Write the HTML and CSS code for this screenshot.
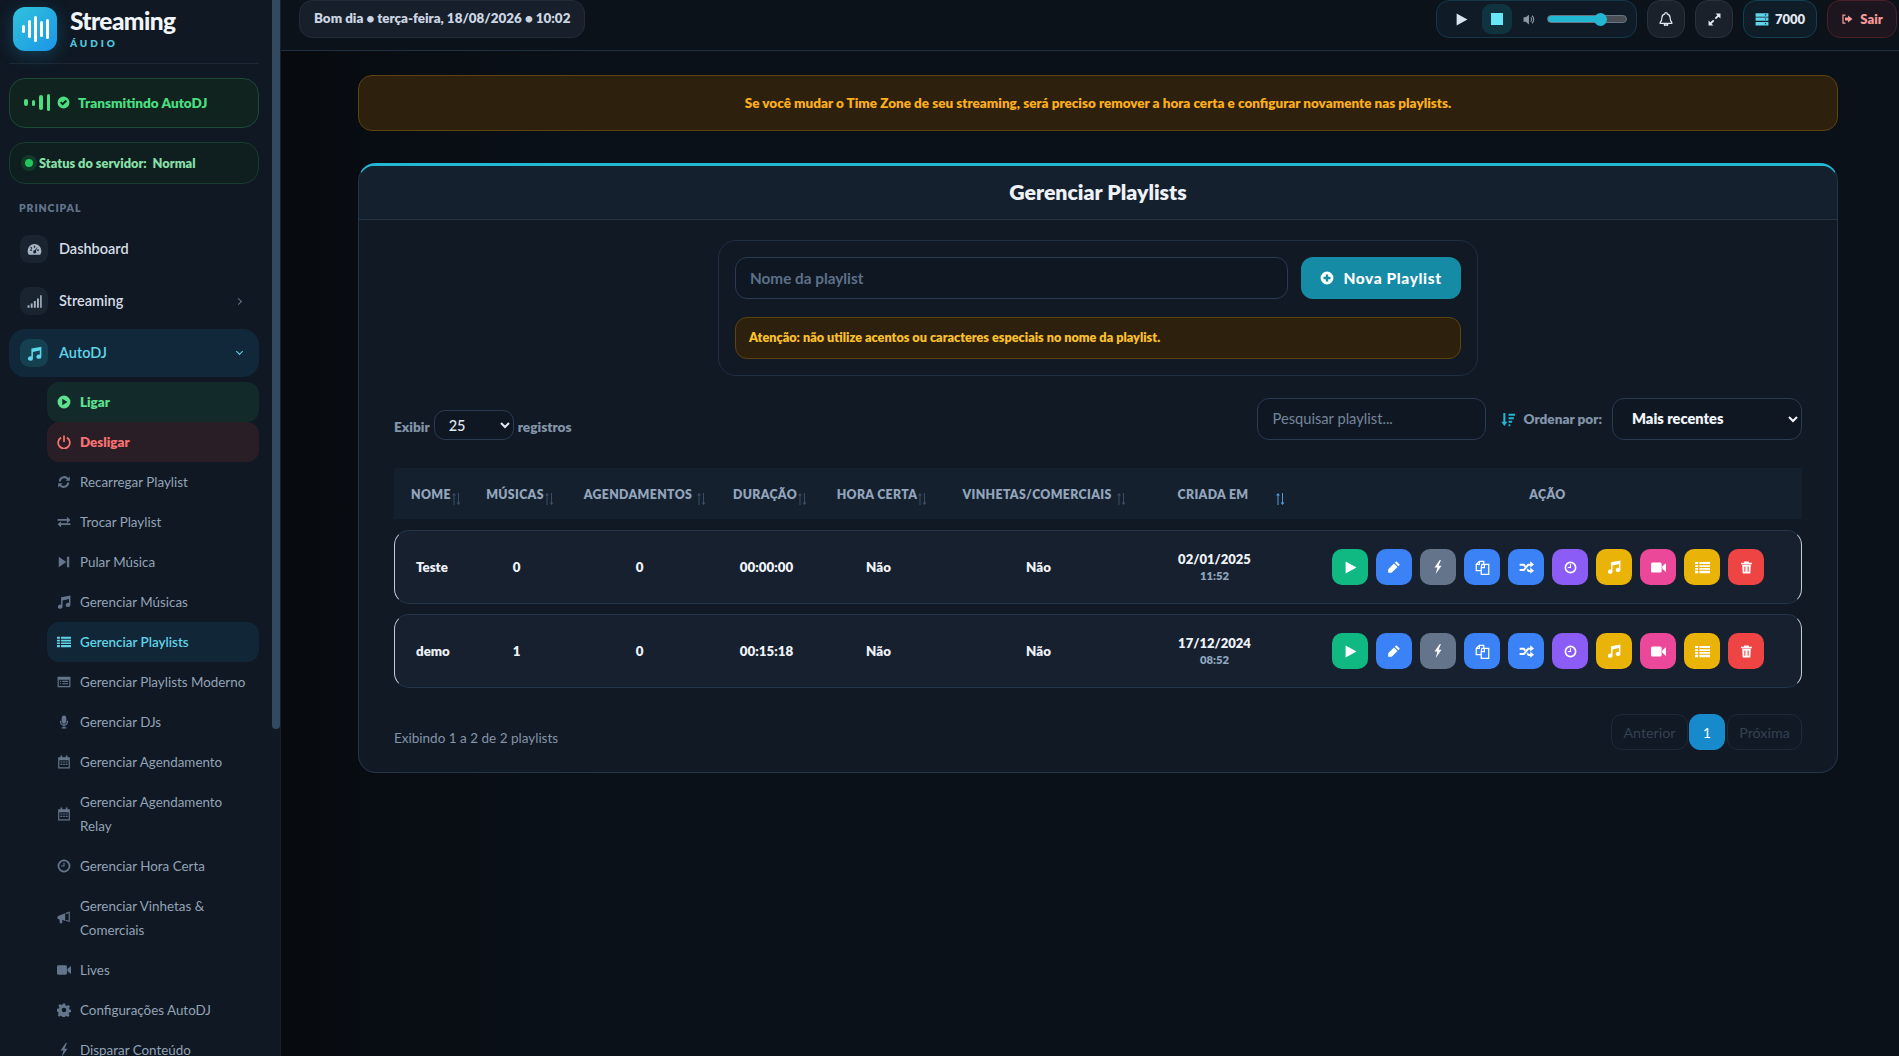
FILE: index.html
```html
<!DOCTYPE html>
<html lang="pt-BR">
<head>
<meta charset="utf-8">
<title>Gerenciar Playlists</title>
<link rel="stylesheet" href="styles.css">
</head>
<body>
<svg class="defs" aria-hidden="true">
  <symbol id="i-play" viewBox="0 0 24 24"><path d="M3 1l20 11L3 23z"/></symbol>
  <symbol id="i-pencil" viewBox="0 0 24 24"><path d="M16 2l6 6-2.500 2.500-6-6zM12 6l6 6L8 22H2v-6z"/></symbol>
  <symbol id="i-bolt" viewBox="0 0 24 24"><path d="M15 0L6 13h5L8 24l10-14h-5l4-10z"/></symbol>
  <symbol id="i-copy" viewBox="0 0 24 24"><path fill="none" stroke="currentColor" stroke-width="2" d="M9 17H2V7l5-5h7v5M11 7h11v16H10V12zM10 12h5V7M7 2v5H2"/></symbol>
  <symbol id="i-random" viewBox="0 0 24 24"><path d="M18 2l6 5-6 5V9h-2.500l-7 8.500H1v-3h6l7-8.500h4zM18 12l6 5-6 5v-3h-3.500l-2.500-3 2-2.400 1.800 2.400H18zM1 6h7.500l2.500 3-2 2.400L7 9H1z"/></symbol>
  <symbol id="i-clock" viewBox="0 0 24 24"><circle cx="12" cy="12" r="9.500" fill="none" stroke="currentColor" stroke-width="3"/><path d="M11 6h2v7H7v-2h4z"/></symbol>
  <symbol id="i-music" viewBox="0 0 24 24"><path d="M23 1v16a4 3.400 0 1 1-2.500-3.100V7l-11 2.500V20a4 3.400 0 1 1-2.500-3.100V4z"/></symbol>
  <symbol id="i-video" viewBox="0 0 24 24"><rect x="0" y="4" width="17" height="16" rx="2.500"/><path d="M18 10l6-5v14l-6-5z"/></symbol>
  <symbol id="i-list" viewBox="0 0 24 24"><path d="M0 3h5v3.500H0zM7 3h17v3.500H7zM0 8.200h5V11H0zM7 8.200h17V11H7zM0 12.700h5v2.800H0zM7 12.700h17v2.800H7zM0 17.200h5V21H0zM7 17.200h17V21H7z"/></symbol>
  <symbol id="i-moderno" viewBox="0 0 24 24"><path fill-rule="evenodd" d="M1 3h22v18H1zM3 8v11h18V8zM5 10h2v2H5zM9 10h10v2H9zM5 14h2v2H5zM9 14h10v2H9z"/></symbol>
  <symbol id="i-trash" viewBox="0 0 24 24"><path d="M8 1h8l1 2h5v3H2V3h5zM4 7h16l-1 16H5zM8 10v10h2V10zM14 10v10h2V10z" fill-rule="evenodd"/></symbol>
  <symbol id="i-gauge" viewBox="0 0 24 24"><path fill-rule="evenodd" d="M12 3a11 11 0 0 1 11 11c0 2.500-.8 4.800-2 6.500H3C1.800 18.800 1 16.500 1 14A11 11 0 0 1 12 3zM11 6v3h2V6zM5 12v2h3v-2zM16 12v2h3v-2zM6.500 7.500L5.200 9l2 2 1.400-1.400zM17 7l-4.500 6.200a2.500 2.500 0 1 0 1.800 1z"/></symbol>
  <symbol id="i-signal" viewBox="0 0 24 24"><path d="M1 18h3v4H1zM6 15h3v7H6zM11 11h3v11h-3zM16 7h3v15h-3zM21 2h2.500v20H21z"/></symbol>
  <symbol id="i-check" viewBox="0 0 24 24"><path fill-rule="evenodd" d="M12 1a11 11 0 1 0 0 22 11 11 0 0 0 0-22zM18.500 9.500l-8 8-5-5L8 10l2.500 2.500L16 7z"/></symbol>
  <symbol id="i-circleplay" viewBox="0 0 24 24"><path fill-rule="evenodd" d="M12 1a11 11 0 1 0 0 22 11 11 0 0 0 0-22zM9 6.500l9 5.500-9 5.500z"/></symbol>
  <symbol id="i-power" viewBox="0 0 24 24"><path d="M10.500 1h3v11h-3z"/><path d="M7 4.500a10 10 0 1 0 10 0" fill="none" stroke="currentColor" stroke-width="3"/></symbol>
  <symbol id="i-refresh" viewBox="0 0 24 24"><path d="M3 11A9.500 9.500 0 0 1 19.500 5L22 2.500V10h-7.500l2.500-2.500A6 6 0 0 0 6.500 11zM21 13A9.500 9.500 0 0 1 4.500 19L2 21.500V14h7.500L7 16.500A6 6 0 0 0 17.500 13z"/></symbol>
  <symbol id="i-exchange" viewBox="0 0 24 24"><path d="M1 7h16V3l6 5.500-6 5.500v-4H1zM23 14H7v-3.500L1 16l6 5.500V17h16z" /></symbol>
  <symbol id="i-skip" viewBox="0 0 24 24"><path d="M3 3l13 9-13 9zM17 3h4v18h-4z"/></symbol>
  <symbol id="i-mic" viewBox="0 0 24 24"><rect x="8" y="1" width="8" height="14" rx="4"/><path d="M5 10h2v1a5 5 0 0 0 10 0v-1h2v1a7 7 0 0 1-6 7v3h3v2H8v-2h3v-3a7 7 0 0 1-6-7z"/></symbol>
  <symbol id="i-calendar" viewBox="0 0 24 24"><path fill-rule="evenodd" d="M6 1h3v3h6V1h3v3h4v19H2V4h4zM4 9v12h16V9zM6 11h3v2H6zM10.500 11h3v2h-3zM15 11h3v2h-3zM6 15h3v2H6zM10.500 15h3v2h-3zM15 15h3v2h-3z"/></symbol>
  <symbol id="i-bullhorn" viewBox="0 0 24 24"><path d="M1 9l13-5v13L9 15v6H5l-1-7-3-.5z"/><path d="M15 3l7-2v18l-7-2v-2l5 1.500V4l-5 1.500z"/></symbol>
  <symbol id="i-gear" viewBox="0 0 24 24"><path fill-rule="evenodd" d="M10 1h4l.6 3 2.300 1 2.600-1.700 2.800 2.800L20.600 8.700l1 2.300 2.400.6v4l-3 .6-1 2.300 1.700 2.600-2.800 2.800-2.600-1.700-2.300 1-.6 2.800h-4l-.6-3-2.300-1-2.600 1.700-2.800-2.800 1.700-2.600-1-2.300L0 14v-4l3-.6 1-2.300L2.300 4.500l2.800-2.800 2.600 1.700 2-1zM12 8a4 4 0 1 0 0 8 4 4 0 0 0 0-8z"/></symbol>
  <symbol id="i-volume" viewBox="0 0 24 24"><path d="M1 8h4l6-5v18l-6-5H1z"/><path d="M14 8a5 5 0 0 1 0 8M16.500 5a9 9 0 0 1 0 14" fill="none" stroke="currentColor" stroke-width="2"/></symbol>
  <symbol id="i-bell" viewBox="0 0 24 24"><path d="M12 1a2 2 0 0 1 2 2.200A7 7 0 0 1 19 10c0 5 1 6 3 8v1.500H2V18c2-2 3-3 3-8a7 7 0 0 1 5-6.800A2 2 0 0 1 12 1zM9 21h6a3 3 0 0 1-6 0z" fill="none" stroke="currentColor" stroke-width="2"/></symbol>
  <symbol id="i-expand" viewBox="0 0 24 24"><path d="M14 1h9v9l-3.300-3.300-5 5-2.400-2.400 5-5zM10 23H1v-9l3.300 3.300 5-5 2.400 2.400-5 5z"/></symbol>
  <symbol id="i-server" viewBox="0 0 24 24"><path fill-rule="evenodd" d="M1 2h22v6H1zM1 9.500h22v5.500H1zM1 17h22v6H1zM17 4v2h2V4zM17 11v2h2v-2zM17 19v2h2v-2z"/></symbol>
  <symbol id="i-signout" viewBox="0 0 24 24"><path d="M9 4H4v16h5" fill="none" stroke="currentColor" stroke-width="2.500"/><path d="M14 5l9 7-9 7v-4H8V9h6z"/></symbol>
  <symbol id="i-plus" viewBox="0 0 24 24"><path fill-rule="evenodd" d="M12 1a11 11 0 1 0 0 22 11 11 0 0 0 0-22zM10 6h4v4h4v4h-4v4h-4v-4H6v-4h4z"/></symbol>
  <symbol id="i-sortdown" viewBox="0 0 24 24"><path d="M4 1h3.500v15H11l-5.200 7L.5 16H4zM13 2h11v3.500H13zM13 8h9v3.500h-9zM13 14h6v3.500h-6zM13 20h3v3.500h-3z"/></symbol>
  <symbol id="i-sort" viewBox="0 0 9 12"><path d="M1.500 12V2.500H0L2 0l2 2.500H2.500V12z"/><path d="M6 0v9.500H4.500L6.500 12l2-2.500H7V0z"/></symbol>
</svg>

<div class="shell">
  <aside class="sidebar">
    <div class="brand">
      <div class="logo">
        <span class="lb b1"></span><span class="lb b2"></span><span class="lb b3"></span><span class="lb b4"></span><span class="lb b5"></span>
      </div>
      <div class="brand-text">
        <div class="brand-name">Streaming</div>
        <div class="brand-sub">ÁUDIO</div>
      </div>
    </div>

    <div class="live-card">
      <span class="eq"><i class="e1"></i><i class="e2"></i><i class="e3"></i><i class="e4"></i></span>
      <svg class="ic13"><use href="#i-check"/></svg>
      <span>Transmitindo AutoDJ</span>
    </div>
    <div class="server-card">
      <span class="dot"></span>
      <span>Status do servidor:&nbsp; Normal</span>
    </div>

    <div class="section-label">PRINCIPAL</div>

    <nav class="nav">
      <a class="nav-item"><span class="nav-ic"><svg><use href="#i-gauge"/></svg></span><span class="nav-tx">Dashboard</span></a>
      <a class="nav-item"><span class="nav-ic"><svg><use href="#i-signal"/></svg></span><span class="nav-tx">Streaming</span><span class="chev right"></span></a>
      <a class="nav-item open"><span class="nav-ic"><svg><use href="#i-music"/></svg></span><span class="nav-tx">AutoDJ</span><span class="chev down"></span></a>
      <div class="sub">
        <a class="sub-item on"><svg><use href="#i-circleplay"/></svg><span>Ligar</span></a>
        <a class="sub-item off"><svg><use href="#i-power"/></svg><span>Desligar</span></a>
        <a class="sub-item"><svg><use href="#i-refresh"/></svg><span>Recarregar Playlist</span></a>
        <a class="sub-item"><svg><use href="#i-exchange"/></svg><span>Trocar Playlist</span></a>
        <a class="sub-item"><svg><use href="#i-skip"/></svg><span>Pular Música</span></a>
        <a class="sub-item"><svg><use href="#i-music"/></svg><span>Gerenciar Músicas</span></a>
        <a class="sub-item active"><svg><use href="#i-list"/></svg><span>Gerenciar Playlists</span></a>
        <a class="sub-item"><svg><use href="#i-moderno"/></svg><span>Gerenciar Playlists Moderno</span></a>
        <a class="sub-item"><svg><use href="#i-mic"/></svg><span>Gerenciar DJs</span></a>
        <a class="sub-item"><svg><use href="#i-calendar"/></svg><span>Gerenciar Agendamento</span></a>
        <a class="sub-item two"><svg><use href="#i-calendar"/></svg><span>Gerenciar Agendamento<br>Relay</span></a>
        <a class="sub-item"><svg><use href="#i-clock"/></svg><span>Gerenciar Hora Certa</span></a>
        <a class="sub-item two"><svg><use href="#i-bullhorn"/></svg><span>Gerenciar Vinhetas &amp;<br>Comerciais</span></a>
        <a class="sub-item"><svg><use href="#i-video"/></svg><span>Lives</span></a>
        <a class="sub-item"><svg><use href="#i-gear"/></svg><span>Configurações AutoDJ</span></a>
        <a class="sub-item"><svg><use href="#i-bolt"/></svg><span>Disparar Conteúdo</span></a>
      </div>
    </nav>
    <div class="thumb"></div>
  </aside>

  <div class="main">
    <header class="topbar">
      <div class="greeting">Bom dia • terça-feira, 18/08/2026 • 10:02</div>
      <div class="top-actions">
        <div class="player">
          <button class="pl-btn"><svg class="ic-play"><use href="#i-play"/></svg></button>
          <button class="pl-btn stop"><span class="stop-sq"></span></button>
          <svg class="ic-vol"><use href="#i-volume"/></svg>
          <input class="range" type="range" min="0" max="100" value="70" aria-label="Volume">
        </div>
        <button class="sq-btn"><svg><use href="#i-bell"/></svg></button>
        <button class="sq-btn"><svg class="small"><use href="#i-expand"/></svg></button>
        <div class="pill-listeners"><svg><use href="#i-server"/></svg><span>7000</span></div>
        <button class="pill-exit"><svg><use href="#i-signout"/></svg><span>Sair</span></button>
      </div>
    </header>

    <main class="content">
      <div class="alert">Se você mudar o Time Zone de seu streaming, será preciso remover a hora certa e configurar novamente nas playlists.</div>

      <section class="card">
        <h1 class="card-title">Gerenciar Playlists</h1>
        <div class="card-body">
          <div class="create-box">
            <div class="create-row">
              <input class="name-input" type="text" placeholder="Nome da playlist">
              <button class="new-btn"><svg><use href="#i-plus"/></svg>Nova Playlist</button>
            </div>
            <div class="warn">Atenção: não utilize acentos ou caracteres especiais no nome da playlist.</div>
          </div>

          <div class="toolbar">
            <div class="show">
              <label class="show-lb">Exibir</label>
              <select class="per-page"><option>25</option></select>
              <label class="show-lb">registros</label>
            </div>
            <div class="filters">
              <input class="search" type="text" placeholder="Pesquisar playlist...">
              <svg class="sort-ic"><use href="#i-sortdown"/></svg>
              <label class="order-lb">Ordenar por:</label>
              <select class="order"><option>Mais recentes</option></select>
            </div>
          </div>

          <div class="thead grid">
            <div class="th left"><span class="lbl">NOME<svg class="sort"><use href="#i-sort"/></svg></span></div>
            <div class="th"><span class="lbl">MÚSICAS<svg class="sort"><use href="#i-sort"/></svg></span></div>
            <div class="th"><span class="lbl">AGENDAMENTOS<svg class="sort gap"><use href="#i-sort"/></svg></span></div>
            <div class="th"><span class="lbl">DURAÇÃO<svg class="sort"><use href="#i-sort"/></svg></span></div>
            <div class="th"><span class="lbl">HORA CERTA<svg class="sort"><use href="#i-sort"/></svg></span></div>
            <div class="th"><span class="lbl">VINHETAS/COMERCIAIS<svg class="sort gap"><use href="#i-sort"/></svg></span></div>
            <div class="th"><span class="lbl">CRIADA EM<svg class="sort far"><use href="#i-sort"/></svg></span></div>
            <div class="th action-h">AÇÃO</div>
          </div>

          <div class="trow first grid">
            <div class="td name">Teste</div>
            <div class="td">0</div>
            <div class="td">0</div>
            <div class="td">00:00:00</div>
            <div class="td">Não</div>
            <div class="td">Não</div>
            <div class="td date">02/01/2025<small>11:52</small></div>
            <div class="actions">
              <button class="ab green"><svg class="sm"><use href="#i-play"/></svg></button>
              <button class="ab blue"><svg><use href="#i-pencil"/></svg></button>
              <button class="ab slate"><svg><use href="#i-bolt"/></svg></button>
              <button class="ab blue"><svg class="lg"><use href="#i-copy"/></svg></button>
              <button class="ab blue"><svg class="lg"><use href="#i-random"/></svg></button>
              <button class="ab violet"><svg class="sm"><use href="#i-clock"/></svg></button>
              <button class="ab yellow"><svg><use href="#i-music"/></svg></button>
              <button class="ab pink"><svg class="lg"><use href="#i-video"/></svg></button>
              <button class="ab yellow"><svg class="lg"><use href="#i-list"/></svg></button>
              <button class="ab red"><svg class="sm"><use href="#i-trash"/></svg></button>
            </div>
          </div>

          <div class="trow grid">
            <div class="td name">demo</div>
            <div class="td">1</div>
            <div class="td">0</div>
            <div class="td">00:15:18</div>
            <div class="td">Não</div>
            <div class="td">Não</div>
            <div class="td date">17/12/2024<small>08:52</small></div>
            <div class="actions">
              <button class="ab green"><svg class="sm"><use href="#i-play"/></svg></button>
              <button class="ab blue"><svg><use href="#i-pencil"/></svg></button>
              <button class="ab slate"><svg><use href="#i-bolt"/></svg></button>
              <button class="ab blue"><svg class="lg"><use href="#i-copy"/></svg></button>
              <button class="ab blue"><svg class="lg"><use href="#i-random"/></svg></button>
              <button class="ab violet"><svg class="sm"><use href="#i-clock"/></svg></button>
              <button class="ab yellow"><svg><use href="#i-music"/></svg></button>
              <button class="ab pink"><svg class="lg"><use href="#i-video"/></svg></button>
              <button class="ab yellow"><svg class="lg"><use href="#i-list"/></svg></button>
              <button class="ab red"><svg class="sm"><use href="#i-trash"/></svg></button>
            </div>
          </div>

          <div class="foot">
            <div class="count">Exibindo 1 a 2 de 2 playlists</div>
            <div class="pager">
              <button class="pg prev">Anterior</button>
              <button class="pg cur">1</button>
              <button class="pg next">Próxima</button>
            </div>
          </div>
        </div>
      </section>
    </main>
  </div>
</div>
</body>
</html>
```

FILE: styles.css
```css
* { box-sizing: border-box; }
html, body { margin: 0; height: 100%; overflow: hidden; }
body {
  font-family: "Lato", "Noto Sans", sans-serif;
  background: #0a1017;
  color: #e2e8f0;
  font-size: 14px;
}
.defs { position: absolute; width: 0; height: 0; }
svg { fill: currentColor; display: block; }
button { font-family: inherit; cursor: pointer; }
.shell { display: flex; height: 1056px; }

/* sidebar */
.sidebar {
  position: relative;
  width: 281px;
  flex: none;
  height: 100%;
  overflow: hidden;
  background: #0f1823;
  padding-right: 21px;
  padding-left: 9px;
  border-right: 1px solid #17222e;
}
.thumb {
  position: absolute;
  top: 0; right: 0;
  width: 8px; height: 729px;
  background: #334960;
  border-radius: 0 0 4px 4px;
}
.brand {
  height: 64px;
  display: flex;
  gap: 13px;
  padding: 7px 0 0 4px;
  border-bottom: 1px solid #1c2835;
}
.logo {
  width: 44px; height: 44px;
  border-radius: 12px;
  background: linear-gradient(135deg, #30c3dc, #1b95e6);
  display: flex; align-items: center; justify-content: center; gap: 3px;
  box-shadow: 0 4px 18px rgba(34, 170, 220, .28);
}
.lb { width: 3px; background: #fff; border-radius: 2px; display: block; }
.b1 { height: 8px; } .b2 { height: 18px; } .b3 { height: 26px; } .b4 { height: 16px; } .b5 { height: 20px; }
.brand-text { margin-top: 1px; }
.brand-name { font-size: 24.500px; font-weight: 900; color: #f1f5f9; line-height: 26px; letter-spacing: -.6px; }
.brand-sub { font-size: 10px; font-weight: 800; color: #4fc6de; letter-spacing: 2.900px; margin-top: 3px; line-height: 12px; }

.live-card {
  margin-top: 14px;
  height: 50px;
  border: 1px solid #1c4a37;
  border-radius: 16px;
  background: #10231f;
  display: flex; align-items: center;
  padding: 0 14px 1px;
  gap: 8px;
  color: #4ade80;
  font-weight: 800;
  font-size: 13.600px;
}
.eq { display: flex; align-items: center; gap: 4px; margin-right: -1px; }
.eq i { display: block; width: 3.500px; background: #4ade80; border-radius: 2px; }
.e1 { height: 7px; } .e2 { height: 6px; } .e3 { height: 15px; } .e4 { height: 17px; }
.ic13 { width: 13px; height: 13px; }
.server-card {
  margin-top: 14px;
  height: 42px;
  border: 1px solid #173c30;
  border-radius: 16px;
  background: #0f1f1f;
  display: flex; align-items: center;
  padding: 0 15px 1px;
  gap: 6px;
  color: #86dfa6;
  font-weight: 800;
  font-size: 12.800px;
}
.dot { width: 8px; height: 8px; border-radius: 50%; background: #22c55e; box-shadow: 0 0 0 4px rgba(34, 197, 94, .16); }
.section-label {
  margin: 17px 0 0 10px;
  font-size: 10.500px; font-weight: 800;
  letter-spacing: .9px; color: #64748b;
  line-height: 14px;
}
.nav { margin-top: 10px; display: flex; flex-direction: column; gap: 4px; }
.nav-item {
  height: 48px;
  display: flex; align-items: center;
  padding: 0 18px 0 11px;
  border-radius: 16px;
  color: #d6dde6;
  font-size: 14.500px;
  font-weight: 600;
}
.nav-tx { flex: 1; padding-bottom: 2px; }
.nav-ic {
  width: 28px; height: 28px; border-radius: 9px;
  background: #1a2430;
  display: flex; align-items: center; justify-content: center;
  margin-right: 11px;
  color: #a7b4c4;
}
.nav-ic svg { width: 15px; height: 15px; }
.chev { width: 5px; height: 5px; border: solid #64748b; border-width: 0 1.500px 1.500px 0; display: block; }
.chev.right { transform: rotate(-45deg); }
.chev.down { transform: rotate(45deg); border-color: #67d8ec; margin-top: -3px; margin-right: -1px; }
.nav-item.open { background: #11283a; color: #5fd5ea; }
.nav-item.open .nav-ic { background: #14404f; color: #5fd5ea; }
.sub { margin: 1px 0 0 38px; display: flex; flex-direction: column; }
.sub-item {
  min-height: 40px;
  display: flex; align-items: center;
  gap: 9px;
  padding: 0 10px;
  border-radius: 12px;
  color: #94a3b6;
  font-size: 13.400px;
  line-height: 24px;
}
.sub-item span { margin-top: -1px; }
.sub-item svg { width: 14px; height: 14px; flex: none; color: #64748b; }
.sub-item.two { min-height: 64px; }
.sub-item.on { background: #122b2a; color: #5fe08f; font-weight: 800; }
.sub-item.on svg { color: #5fe08f; }
.sub-item.off { background: #2a1e26; color: #f87171; font-weight: 800; }
.sub-item.off svg { color: #f87171; }
.sub-item.active { background: #112636; color: #5fd5ea; font-weight: 600; }
.sub-item.active svg { color: #5fd5ea; }

/* main */
.main { flex: 1; min-width: 0; display: flex; flex-direction: column; background: linear-gradient(90deg, #070b10, #0a1118 20%, #0a1118); }
.topbar {
  height: 51px;
  flex: none;
  display: flex;
  justify-content: space-between;
  align-items: flex-start;
  padding: 0 2px 0 18px;
  border-bottom: 1px solid #1f3040;
  background: #0b121a;
}
.greeting {
  height: 38px;
  padding: 0 14px 3px;
  display: flex; align-items: center;
  background: #171f2b;
  border: 1px solid #222c38;
  border-radius: 13px;
  font-weight: 800;
  font-size: 13.400px;
  color: #cbd5e1;
}
.top-actions { display: flex; gap: 10px; }
.player {
  width: 201px; height: 38px;
  display: flex; align-items: center;
  padding: 0 6px 0 9px;
  border: 1px solid #14384a;
  background: #0f1c27;
  border-radius: 13px;
}
.pl-btn { width: 30px; height: 30px; border: 0; background: none; display: flex; align-items: center; justify-content: center; color: #d7e3ef; padding: 0; border-radius: 9px; }
.pl-btn.stop { background: #10343f; margin-left: 6px; }
.ic-play { width: 13px; height: 13px; }
.stop-sq { width: 12px; height: 12px; background: #67e8f9; display: block; }
.ic-vol { width: 13px; height: 13px; color: #8d99a6; margin: 0 11px 0 11px; flex: none; }
.range {
  appearance: none; -webkit-appearance: none;
  width: 80px; height: 8px; margin: 0;
  border-radius: 4px;
  border: 1px solid #6b7280;
  background: linear-gradient(90deg, #22b8d4 66%, #4a4f55 66%);
}
.range::-webkit-slider-thumb {
  -webkit-appearance: none; appearance: none;
  width: 13px; height: 13px; border-radius: 50%;
  background: #22b8d4; border: 0;
}
.sq-btn {
  width: 38px; height: 38px; padding: 0;
  display: flex; align-items: center; justify-content: center;
  background: #1a212b; border: 1px solid #2a323d; border-radius: 13px;
  color: #e2e8f0;
}
.sq-btn svg { width: 14px; height: 14px; }
.sq-btn svg.small { width: 13px; height: 13px; }
.pill-listeners {
  width: 74px; height: 38px;
  display: flex; align-items: center; justify-content: center; gap: 6px;
  background: #0f1d28; border: 1px solid #134050; border-radius: 13px;
  padding-bottom: 1px;
  font-weight: 800; font-size: 13px; color: #e2e8f0;
}
.pill-listeners svg { width: 14px; height: 14px; color: #5fd5ea; }
.pill-exit {
  width: 70px; height: 38px; padding: 0 0 1px;
  display: flex; align-items: center; justify-content: center; gap: 7px;
  background: #1e161f; border: 1px solid #4a1f27; border-radius: 13px;
  font-weight: 800; font-size: 13px; color: #f59a9a;
}
.pill-exit svg { width: 12px; height: 12px; }

.content { flex: 1; padding: 24px 61px 0 77px; }
.alert {
  height: 56px;
  display: flex; align-items: center; justify-content: center;
  background: #2d210d;
  border: 1px solid #5c4310;
  border-radius: 14px;
  color: #fbad1e;
  font-weight: 800;
  font-size: 13.500px;
}
.card {
  margin-top: 32px;
  background: #111925;
  border: 1px solid #243449;
  border-top: 3px solid #22b8d4;
  border-radius: 18px;
}
.card-title {
  margin: 0;
  height: 54px;
  display: flex; align-items: center; justify-content: center;
  background: #15202f;
  border-bottom: 1px solid #233244;
  border-radius: 15px 15px 0 0;
  font-size: 21.300px;
  font-weight: 800;
  color: #eef2f7;
  padding-bottom: 2px;
}
.card-body { padding: 20px 35px 22px; }

.create-box {
  width: 760px;
  margin: 0 auto;
  height: 136px;
  padding: 16px;
  border: 1px solid #202f42;
  border-radius: 18px;
}
.create-row { display: flex; gap: 13px; }
.name-input {
  flex: 1; height: 42px; min-width: 0;
  background: #0f1722; border: 1px solid #2a3b52; border-radius: 12px;
  padding: 0 14px; color: #e2e8f0;
  font: 700 15.300px "Lato", sans-serif;
}
.name-input::placeholder { color: #5e7088; }
.new-btn {
  width: 160px; height: 42px; flex: none;
  display: flex; align-items: center; justify-content: center; gap: 9px;
  background: #158ba5; border: 0; border-radius: 12px;
  color: #fff; font-weight: 900; font-size: 15.500px; letter-spacing: .6px;
}
.new-btn svg { width: 14px; height: 14px; }
.warn {
  margin-top: 18px;
  height: 42px;
  display: flex; align-items: center;
  padding: 0 13px 2px;
  background: #2d210d;
  border: 1px solid #5c4310;
  border-radius: 12px;
  color: #fbc02d;
  font-weight: 800;
  font-size: 12.700px;
}

.toolbar { margin-top: 22px; display: flex; justify-content: space-between; align-items: flex-end; }
.show { display: flex; align-items: center; gap: 4px; color: #8294a8; font-weight: 800; font-size: 13.700px; }
.show-lb { margin-top: 3px; }
.per-page {
  width: 80px; height: 30px;
  background: #0f1722; color: #e2e8f0;
  border: 1px solid #2a3b52; border-radius: 11px;
  padding: 0 10px;
  font: 500 14.500px "Lato", sans-serif;
}
.filters { display: flex; align-items: center; }
.search {
  width: 229px; height: 42px;
  background: #0f1722; border: 1px solid #2a3b52; border-radius: 12px;
  padding: 0 14px 2px; color: #e2e8f0;
  font: 400 14.700px "Lato", sans-serif;
}
.search::placeholder { color: #75859a; }
.sort-ic { width: 14px; height: 15px; color: #22b8d4; margin: 0 8px 0 15px; }
.order-lb { color: #8294a8; font-weight: 800; font-size: 13.600px; margin-right: 10px; }
.order {
  width: 190px; height: 42px;
  background: #0f1722; color: #f1f5f9;
  border: 1px solid #2a3b52; border-radius: 12px;
  padding: 0 15px 1px;
  font: 800 14.600px "Lato", sans-serif;
}

.grid { display: grid; grid-template-columns: 74px 96px 150px 104px 120px 200px 152px 1fr; align-items: center; }
.thead {
  margin-top: 28px;
  height: 51px;
  background: #15202f;
  font-size: 12.300px;
  font-weight: 800;
  letter-spacing: .35px;
  color: #93a5bb;
}
.th { text-align: center; padding: 1px 2px 0 0; }
.th.left { text-align: left; padding: 1px 0 0 17px; }
.action-h { padding: 1px 0 0 3px; }
.lbl { position: relative; }
.sort { position: absolute; left: 100%; top: 6px; margin-left: 1px; width: 9px; height: 12px; color: #3a4e66; }
.sort.gap { margin-left: 5px; }
.sort.far { margin-left: 28px; color: #4f9bd4; }

.trow {
  height: 74px;
  margin-top: 10px;
  background: #16202f;
  border: 1px solid #243449;
  border-left-color: #c4ccd6;
  border-right-color: #c4ccd6;
  border-radius: 15px;
  font-weight: 800;
  font-size: 13.300px;
  color: #eef2f7;
}
.trow.first { margin-top: 11px; }
.td { text-align: center; margin-left: -1px; }
.td.name { text-align: left; padding-left: 22px; }
.td.date { font-size: 13px; }
.td.date small { display: block; font-size: 11.300px; color: #8fa6bd; font-weight: 800; line-height: 17px; }
.actions { display: flex; gap: 8px; padding-left: 41px; }
.ab {
  width: 36px; height: 36px; padding: 0;
  display: flex; align-items: center; justify-content: center;
  border: 0; border-radius: 10px; color: #fff;
}
.ab svg { width: 14px; height: 14px; }
.ab svg.sm { width: 13px; height: 13px; }
.ab svg.lg { width: 15px; height: 15px; }
.green { background: #10b981; }
.blue { background: #3b82f6; }
.slate { background: #64748b; }
.violet { background: #8b5cf6; }
.yellow { background: #eab308; }
.pink { background: #ec4899; }
.red { background: #ef4444; }

.foot { margin-top: 26px; display: flex; justify-content: space-between; align-items: flex-end; }
.count { color: #8294a8; font-size: 13.500px; line-height: 24px; }
.pager { display: flex; gap: 1px; }
.pg {
  height: 36px;
  border: 1px solid #1e2a38; background: transparent;
  border-radius: 11px;
  color: #344152;
  font-size: 14.300px;
}
.prev { width: 77px; }
.next { width: 75px; margin-left: 1px; }
.cur { width: 36px; background: #178acb; border-color: #178acb; color: #fff; }
```
